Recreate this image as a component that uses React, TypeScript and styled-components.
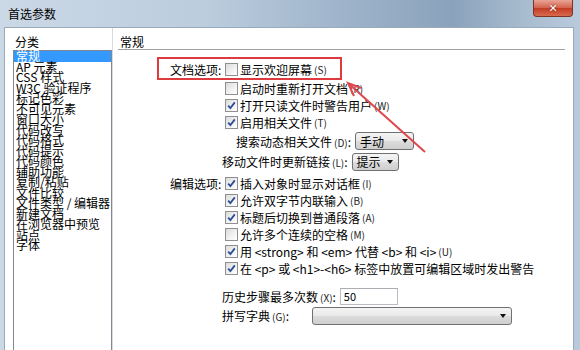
import styled, { createGlobalStyle } from "styled-components";

const GlobalStyle = createGlobalStyle`
  html, body {
    margin: 0;
    padding: 0;
  }
  body {
    background: #a9bbce;
    font-family: "Noto Sans CJK SC", "Liberation Sans", sans-serif;
    font-size: 12px;
    color: #000;
  }
`;

const Window = styled.div`
  position: relative;
  width: 580px;
  height: 350px;
  overflow: hidden;
  display: flex;
  flex-direction: column;
  background: linear-gradient(90deg, #cbd8e6 0%, #bccdde 35%, #9bb1c8 62%, #8aa2bb 78%, #a7bbcf 90%, #b9cadb 100%);
`;

const TitleBar = styled.div`
  height: 27px;
  display: flex;
  justify-content: space-between;
  align-items: flex-start;
  padding-left: 8px;
  flex-shrink: 0;
`;

const Title = styled.span`
  line-height: 28px;
  font-size: 12px;
`;

const CloseButton = styled.div`
  width: 40px;
  height: 17px;
  margin-right: 7px;
  box-sizing: border-box;
  border: 1px solid #7d3326;
  border-top: none;
  border-radius: 0 0 4px 4px;
  background: linear-gradient(#e9a596, #d3614c 50%, #c23a24 51%, #d86a4c);
  color: #fff;
  font-family: "DejaVu Sans", sans-serif;
  font-weight: bold;
  font-size: 11px;
  display: flex;
  align-items: center;
  justify-content: center;
  text-shadow: 0 0 2px #6a1a10;
`;

const Body = styled.div`
  flex: 1;
  display: flex;
  margin: 0 6px 0 4px;
  background: #fff;
  border: 1px solid #9aaabb;
  border-bottom: none;
`;

const Sidebar = styled.div`
  width: 107px;
  padding-left: 8px;
  box-sizing: border-box;
  display: flex;
  flex-direction: column;
`;

const PanelHeading = styled.div`
  height: 22px;
  padding: 6px 0 0 2px;
  box-sizing: border-box;
  line-height: 16px;
`;

const CategoryList = styled.ul`
  list-style: none;
  margin: 0;
  padding: 0;
  width: 99px;
  height: 320px;
  box-sizing: border-box;
  border: 1px solid #828790;
`;

const CategoryItem = styled.li<{ $selected?: boolean }>`
  height: 10.5px;
  line-height: 10.5px;
  padding-left: 2px;
  white-space: nowrap;
  background: ${(p) => (p.$selected ? "#3399ff" : "transparent")};
  color: ${(p) => (p.$selected ? "#fff" : "#000")};
`;

const Content = styled.div`
  flex: 1;
  border-left: 1px solid #d9d9d9;
  padding: 0 8px 0 5px;
  display: flex;
  flex-direction: column;
`;

const ContentHeading = styled(PanelHeading)`
  border-bottom: 1px solid #a0a0a0;
`;

const Options = styled.div`
  padding-left: 39px;
  display: flex;
  flex-direction: column;
`;

const Highlight = styled.div`
  margin-top: 7px;
  width: 185px;
  height: 23px;
  box-sizing: border-box;
  border: 2px solid #df3a3e;
  padding: 1px 0 0 11px;
  display: flex;
  align-items: center;
`;

const Row = styled.div<{ $indent?: number; $height?: number; $top?: number }>`
  display: flex;
  align-items: center;
  height: ${(p) => p.$height ?? 17}px;
  margin-top: ${(p) => p.$top ?? 0}px;
  padding-left: ${(p) => p.$indent ?? 13}px;
  white-space: nowrap;
`;

const GroupLabel = styled.span`
  width: 55px;
  flex-shrink: 0;
`;

const Spacer = styled.span`
  width: 55px;
  flex-shrink: 0;
`;

const Box = styled.span<{ $checked?: boolean }>`
  width: 13px;
  height: 13px;
  box-sizing: border-box;
  border: 1px solid #8f8f8f;
  background: linear-gradient(135deg, #dcdcdc, #f6f6f6 70%, #ffffff);
  display: inline-flex;
  align-items: center;
  justify-content: center;
  margin-right: 2px;
  flex-shrink: 0;
`;

const Key = styled.span`
  font-size: 10px;
  margin-left: 2px;
  color: #222;
`;

const FieldLabel = styled.span<{ $width?: number }>`
  width: ${(p) => (p.$width ? `${p.$width}px` : "auto")};
  margin-right: 4px;
  flex-shrink: 0;
`;

const Dropdown = styled.div<{ $width: number }>`
  width: ${(p) => p.$width}px;
  height: 18px;
  box-sizing: border-box;
  border: 1px solid #707070;
  border-radius: 3px;
  background: linear-gradient(#f4f4f4, #e9e9e9 50%, #dcdcdc 51%, #cfcfcf);
  display: flex;
  align-items: center;
  justify-content: space-between;
  padding: 0 5px 0 4px;
  font-size: 12px;
`;

const Caret = styled.span`
  width: 0;
  height: 0;
  border-left: 3.5px solid transparent;
  border-right: 3.5px solid transparent;
  border-top: 4px solid #111;
`;

const NumberField = styled.div`
  width: 58px;
  height: 17px;
  box-sizing: border-box;
  border: 1px solid #b9bcc2;
  border-top-color: #abadb3;
  background: #fff;
  padding-left: 3px;
  line-height: 15px;
  font-size: 11px;
`;

const Overlay = styled.svg`
  position: absolute;
  left: 0;
  top: 0;
  pointer-events: none;
`;

function Checkbox({ checked, label, hotkey }: { checked?: boolean; label: string; hotkey: string }) {
  return (
    <>
      <Box $checked={checked}>
        {checked && (
          <svg width="11" height="11" viewBox="0 0 11 11">
            <path d="M2.2 5.6 L4.4 8 L8.8 2.4" fill="none" stroke="#2b4d94" strokeWidth="1.8" />
          </svg>
        )}
      </Box>
      <span>{label}</span>
      <Key>({hotkey})</Key>
    </>
  );
}

const categories = [
  "常规",
  "AP 元素",
  "CSS 样式",
  "W3C 验证程序",
  "标记色彩",
  "不可见元素",
  "窗口大小",
  "代码改写",
  "代码格式",
  "代码提示",
  "代码颜色",
  "辅助功能",
  "复制/粘贴",
  "文件比较",
  "文件类型 / 编辑器",
  "新建文档",
  "在浏览器中预览",
  "站点",
  "字体",
];

const editOptions: { label: string; hotkey: string; checked: boolean }[] = [
  { label: "插入对象时显示对话框", hotkey: "I", checked: true },
  { label: "允许双字节内联输入", hotkey: "B", checked: true },
  { label: "标题后切换到普通段落", hotkey: "A", checked: true },
  { label: "允许多个连续的空格", hotkey: "M", checked: false },
  { label: "用 <strong> 和 <em> 代替 <b> 和 <i>", hotkey: "U", checked: true },
];

export default function App() {
  return (
    <>
      <GlobalStyle />
      <Window>
        <TitleBar>
          <Title>首选参数</Title>
          <CloseButton>✕</CloseButton>
        </TitleBar>
        <Body>
          <Sidebar>
            <PanelHeading>分类</PanelHeading>
            <CategoryList>
              {categories.map((c, i) => (
                <CategoryItem key={c} $selected={i === 0}>
                  {c}
                </CategoryItem>
              ))}
            </CategoryList>
          </Sidebar>
          <Content>
            <ContentHeading>常规</ContentHeading>
            <Options>
              <Highlight>
                <GroupLabel>文档选项:</GroupLabel>
                <Checkbox label="显示欢迎屏幕" hotkey="S" />
              </Highlight>
              <Row>
                <Spacer />
                <Checkbox label="启动时重新打开文档" hotkey="R" />
              </Row>
              <Row>
                <Spacer />
                <Checkbox checked label="打开只读文件时警告用户" hotkey="W" />
              </Row>
              <Row>
                <Spacer />
                <Checkbox checked label="启用相关文件" hotkey="T" />
              </Row>
              <Row $indent={79} $height={20}>
                <FieldLabel>
                  搜索动态相关文件<Key>(D)</Key>:
                </FieldLabel>
                <Dropdown $width={59}>
                  手动
                  <Caret />
                </Dropdown>
              </Row>
              <Row $indent={65} $height={21}>
                <FieldLabel>
                  移动文件时更新链接<Key>(L)</Key>:
                </FieldLabel>
                <Dropdown $width={47}>
                  提示
                  <Caret />
                </Dropdown>
              </Row>
              <Row $top={3}>
                <GroupLabel>编辑选项:</GroupLabel>
                <Checkbox checked label="插入对象时显示对话框" hotkey="I" />
              </Row>
              {editOptions.slice(1).map((o) => (
                <Row key={o.label}>
                  <Spacer />
                  <Checkbox checked={o.checked} label={o.label} hotkey={o.hotkey} />
                </Row>
              ))}
              <Row>
                <Spacer />
                <Box $checked>
                  <svg width="11" height="11" viewBox="0 0 11 11">
                    <path d="M2.2 5.6 L4.4 8 L8.8 2.4" fill="none" stroke="#2b4d94" strokeWidth="1.8" />
                  </svg>
                </Box>
                <span>在 &lt;p&gt; 或 &lt;h1&gt;-&lt;h6&gt; 标签中放置可编辑区域时发出警告</span>
              </Row>
              <Row $indent={65} $height={18} $top={10}>
                <FieldLabel>
                  历史步骤最多次数<Key>(X)</Key>:
                </FieldLabel>
                <NumberField>50</NumberField>
              </Row>
              <Row $indent={65} $height={19} $top={1}>
                <FieldLabel $width={86}>
                  拼写字典<Key>(G)</Key>:
                </FieldLabel>
                <Dropdown $width={200}>
                  <span />
                  <Caret />
                </Dropdown>
              </Row>
            </Options>
          </Content>
        </Body>
        <Overlay width="580" height="350" viewBox="0 0 580 350">
          <line x1="425" y1="152" x2="349" y2="84" stroke="#e0474c" strokeWidth="2" />
          <polyline points="354,96 348,83 361,88" fill="none" stroke="#e0474c" strokeWidth="2" />
        </Overlay>
      </Window>
    </>
  );
}
